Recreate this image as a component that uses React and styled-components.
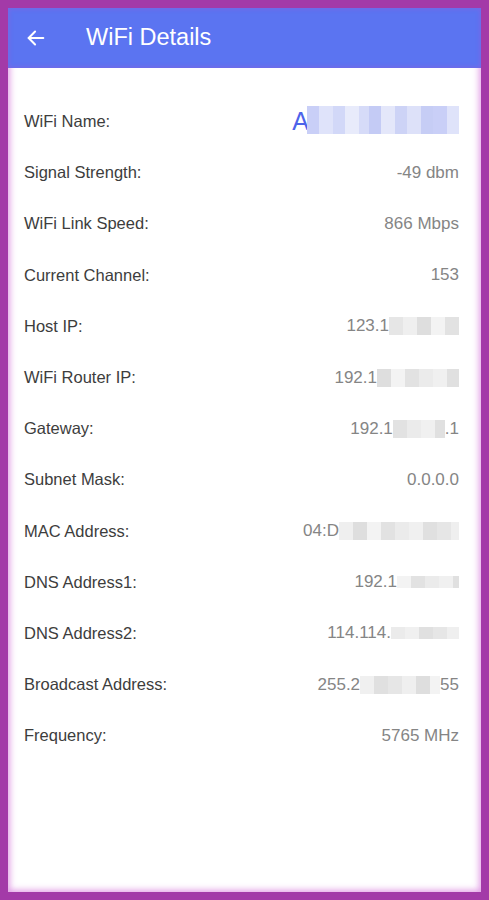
import React from 'react';
import styled, { createGlobalStyle } from 'styled-components';

const GlobalStyle = createGlobalStyle`
  html, body {
    margin: 0;
    padding: 0;
    background: #a33aa8;
  }
  body {
    font-family: "Liberation Sans", Arial, sans-serif;
  }
`;

const Frame = styled.div`
  width: 489px;
  height: 900px;
  box-sizing: border-box;
  padding: 8px 8px 8px 8px;
  background: #a33aa8;
`;

const Screen = styled.div`
  height: 100%;
  display: flex;
  flex-direction: column;
  background: #fff;
  box-shadow: inset 0 0 6px 2px rgba(214, 120, 220, 0.7);
  overflow: hidden;
`;

const Toolbar = styled.header`
  height: 60px;
  flex-shrink: 0;
  display: flex;
  align-items: center;
  background: #5b74f1;
  box-shadow: inset 0 0 4px 1px rgba(150, 90, 220, 0.5);
  padding-left: 16px;
`;

const BackButton = styled.button`
  width: 24px;
  height: 24px;
  padding: 0;
  border: 0;
  background: none;
  display: flex;
  align-items: center;
  justify-content: center;
`;

const Title = styled.h1`
  margin: -1px 0 0 38px;
  font-family: "Liberation Sans", Arial, sans-serif;
  font-size: 23.5px;
  font-weight: 400;
  color: #fff;
`;

const List = styled.div`
  padding: 28px 22px 0 16px;
  display: flex;
  flex-direction: column;
`;

const Row = styled.div`
  height: 51.2px;
  display: flex;
  align-items: center;
  justify-content: space-between;
`;

const Label = styled.span`
  font-size: 16.5px;
  color: #3d3d3d;
`;

const Value = styled.span`
  display: flex;
  align-items: center;
  font-size: 17px;
  color: #858585;
`;

const BigLetter = styled.span`
  font-size: 25px;
  color: #4d63ea;
  margin-right: -2px;
`;

const Mosaic = styled.span`
  display: flex;
  height: ${p => p.h}px;
  margin-top: ${p => p.mt || 0}px;
`;

const Cell = styled.span`
  display: block;
  height: 100%;
  width: ${p => p.w}px;
  background: ${p => p.c};
`;

const blue = ['#c9cff7', '#dfe3fa', '#d2d8f8', '#e8ebfb', '#d6dbf8', '#c4cbf5', '#e4e7fa', '#cdd3f6', '#dde1f9', '#c6cdf5'];
const grey = ['#e6e6e6', '#efefef', '#dedede', '#f3f3f3', '#e2e2e2', '#ebebeb', '#f0f0f0', '#e0e0e0'];

const cells = (widths, palette, offset = 0) =>
  widths.map((w, i) => <Cell key={i} w={w} c={palette[(i + offset) % palette.length]} />);

const Blur = ({ widths, palette = grey, h = 18, offset, mt }) => (
  <Mosaic h={h} mt={mt}>{cells(widths, palette, offset)}</Mosaic>
);

const rows = [
  {
    label: 'WiFi Name:',
    value: (
      <>
        <BigLetter>A</BigLetter>
        <Blur h={28} palette={blue} widths={[12, 14, 12, 14, 10, 12, 14, 12, 14, 12, 14, 12]} mt={-4} />
      </>
    ),
  },
  { label: 'Signal Strength:', value: '-49 dbm' },
  { label: 'WiFi Link Speed:', value: '866 Mbps' },
  { label: 'Current Channel:', value: '153' },
  { label: 'Host IP:', value: <>123.1<Blur widths={[14, 14, 14, 14, 14]} /></> },
  { label: 'WiFi Router IP:', value: <>192.1<Blur widths={[14, 14, 14, 14, 14, 12]} offset={2} /></> },
  { label: 'Gateway:', value: <>192.1<Blur widths={[14, 14, 14, 10]} offset={4} />.1</> },
  { label: 'Subnet Mask:', value: '0.0.0.0' },
  { label: 'MAC Address:', value: <>04:D<Blur widths={[14, 14, 14, 14, 14, 14, 14, 14, 8]} offset={1} /></> },
  { label: 'DNS Address1:', value: <>192.1<Blur h={12} widths={[14, 14, 14, 14, 6]} offset={3} /></> },
  { label: 'DNS Address2:', value: <>114.114.<Blur h={12} widths={[14, 14, 14, 14, 12]} offset={5} /></> },
  { label: 'Broadcast Address:', value: <>255.2<Blur widths={[14, 14, 14, 14, 14, 10]} offset={6} />55</> },
  { label: 'Frequency:', value: '5765 MHz' },
];

const App = () => (
  <Frame>
    <GlobalStyle />
    <Screen>
      <Toolbar>
        <BackButton aria-label="Back">
          <svg width="22" height="22" viewBox="0 0 24 24" fill="none" stroke="#fff" strokeWidth="2.2" strokeLinecap="round" strokeLinejoin="round">
            <path d="M20 12H4" />
            <path d="M11 5l-7 7 7 7" />
          </svg>
        </BackButton>
        <Title>WiFi Details</Title>
      </Toolbar>
      <List>
        {rows.map(r => (
          <Row key={r.label}>
            <Label>{r.label}</Label>
            <Value>{r.value}</Value>
          </Row>
        ))}
      </List>
    </Screen>
  </Frame>
);

export default App;
